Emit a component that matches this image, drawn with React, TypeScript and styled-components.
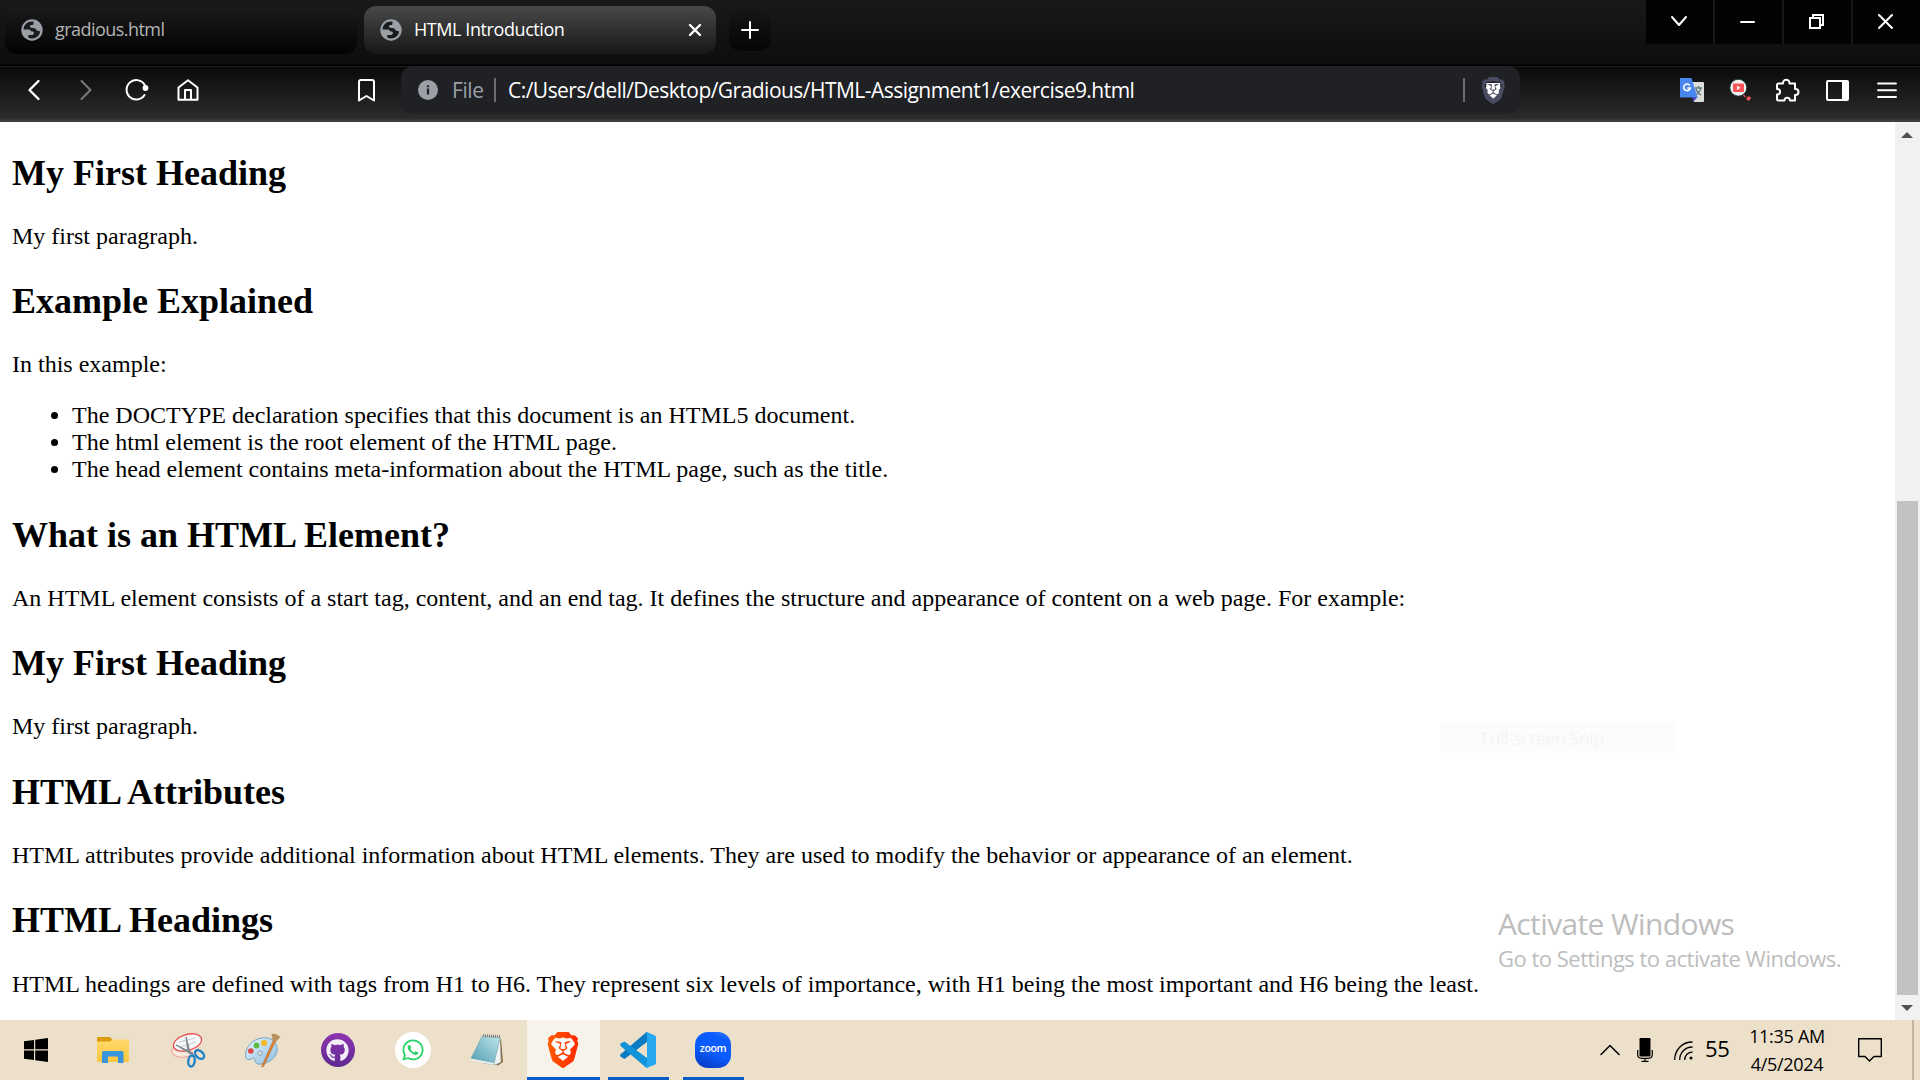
import React from "react";
import styled, { createGlobalStyle } from "styled-components";
import { FaGithub, FaWhatsapp } from "react-icons/fa";
import { SiBrave } from "react-icons/si";

const UI = `"Open Sans", "Noto Sans", sans-serif`;

const GlobalStyle = createGlobalStyle`
  html, body { margin: 0; padding: 0; overflow: hidden; background: #fff; }
  *, *::before, *::after { box-sizing: border-box; }
  button { border: 0; padding: 0; background: none; color: inherit; font: inherit; }
  svg { display: block; flex: none; overflow: visible; }
`;

const Screen = styled.div`
  width: 1920px;
  height: 1080px;
  display: grid;
  grid-template-rows: 67px 55px 898px 60px;
  overflow: hidden;
  font-family: ${UI};
`;

const TabStrip = styled.header`
  display: flex;
  align-items: flex-start;
  padding-left: 5px;
  background: linear-gradient(#191919, #0d0d0d 64px, #000 65px, #000 66px, #1c1c1c 66px);
`;

const Tab = styled.div<{ $active?: boolean }>`
  width: 352px;
  height: 48px;
  margin: 6px 7px 0 0;
  padding: 0 15px 0 16px;
  display: flex;
  align-items: center;
  border-radius: 12px;
  color: ${(p) => (p.$active ? "#fff" : "#b4b4b4")};
  background: ${(p) =>
    p.$active ? "linear-gradient(#494949, #171717)" : "linear-gradient(#1b1b1b, #020202)"};
`;

const TabTitle = styled.span<{ $track: number }>`
  flex: 1;
  margin: 0 0 2px 12px;
  font-size: 18px;
  line-height: 24px;
  letter-spacing: ${(p) => p.$track}px;
  white-space: nowrap;
`;

const NewTab = styled.button`
  display: grid;
  place-items: center;
  width: 42px;
  height: 41px;
  margin: 10px 0 0 6px;
  padding-bottom: 2px;
  border-radius: 12px;
  background: linear-gradient(#151515, #050505);
`;

const WindowControls = styled.div`
  display: grid;
  grid-template-columns: repeat(4, 67px);
  gap: 2px;
  height: 44px;
  margin-left: auto;
  background: #171717;
`;

const ControlButton = styled.button`
  display: grid;
  place-items: center;
  background: #020202;
  padding: 0 2px 1px 0;
`;

const Toolbar = styled.nav`
  display: flex;
  align-items: flex-start;
  background: linear-gradient(#0a0a0a, #2c2c2c 52px, #3d3d3d 53px);
`;

const NavGroup = styled.div`
  display: flex;
  width: 401px;
  padding: 11px 0 0 21px;
`;

const NavButton = styled.button<{ $push?: boolean }>`
  display: grid;
  place-items: center;
  width: 26px;
  height: 24px;
  margin-right: ${(p) => (p.$push ? 22 : 25)}px;
  margin-left: ${(p) => (p.$push ? "auto" : "0")};

  &:first-child {
    margin-right: 26px;
  }
`;

const AddressBar = styled.div`
  display: flex;
  align-items: center;
  width: 1119px;
  height: 48px;
  margin-top: -1px;
  padding: 0 16px 0 17px;
  border-radius: 12px;
  background: #202125;
  color: #fff;
  font-size: 21px;
  line-height: 28px;
  white-space: nowrap;
`;

const Scheme = styled.span`
  width: 42px;
  margin-left: 14px;
  color: #9aa0a6;
  letter-spacing: -0.4px;
`;

const Divider = styled.i`
  width: 2px;
  height: 24px;
  background: #6c6d70;
`;

const Url = styled.span`
  flex: 1;
  margin-left: 12px;
  letter-spacing: -0.53px;
`;

const ShieldButton = styled.button`
  margin-left: 17px;
`;

const Extensions = styled.div`
  display: grid;
  grid-template-columns: 49px 47px 50px 51px 20px;
  align-items: center;
  height: 26px;
  margin: 10px 23px 0 auto;
`;

const Viewport = styled.main`
  display: grid;
  grid-template-columns: 1895px 25px;
  background: #fff;
  min-height: 0;
  overflow: hidden;
`;

const Article = styled.article`
  position: relative;
  padding: 0 12px;
  overflow: hidden;
  font-family: "Liberation Serif", "Times New Roman", serif;
  font-size: 24px;
  line-height: 27px;
  color: #000;
`;

const Heading = styled.h2`
  margin: 31.36px 0 29.2px;
  font-size: 36px;
  line-height: 41px;
  font-weight: 700;

  &:first-child {
    margin-top: 30.6px;
  }
`;

const Paragraph = styled.p`
  margin: 24px 0;
  white-space: nowrap;
`;

const List = styled.ul`
  margin: 23.5px 0 31.4px;
  padding-left: 60px;
`;

const SnipLabel = styled.div`
  position: absolute;
  left: 1440px;
  top: 600px;
  width: 236px;
  height: 31px;
  padding-left: 41px;
  background: #fbfcfe;
  color: #f4f4f5;
  font: 18px/32px ${UI};
  letter-spacing: -0.6px;
`;

const Watermark = styled.aside`
  position: absolute;
  left: 1498px;
  top: 781px;
  color: #bdbdbd;
  font-family: ${UI};
  white-space: nowrap;
`;

const WatermarkTitle = styled.div`
  font-size: 30px;
  line-height: 41px;
  letter-spacing: -0.62px;
`;

const WatermarkText = styled.div`
  margin-top: -1px;
  font-size: 22px;
  line-height: 30px;
  letter-spacing: -0.5px;
`;

const ScrollBar = styled.div`
  display: grid;
  grid-template-rows: 25px 1fr 25px;
  justify-items: center;
  background: #f1f1f1;
`;

const Thumb = styled.div`
  width: 21px;
  height: 494px;
  margin: 354px 1px 0 0;
  background: #c1c1c1;
`;

const Arrow = styled.div<{ $down?: boolean }>`
  width: 0;
  height: 0;
  align-self: center;
  margin-right: 1px;
  border: 6px solid transparent;
  border-top-width: ${(p) => (p.$down ? "6px" : "0")};
  border-bottom-width: ${(p) => (p.$down ? "0" : "6px")};
  border-top-color: ${(p) => (p.$down ? "#505050" : "transparent")};
  border-bottom-color: ${(p) => (p.$down ? "transparent" : "#505050")};
`;

const Taskbar = styled.footer`
  display: flex;
  background: #ede0ca;
`;

const TaskItem = styled.button<{ $state?: "open" | "active" }>`
  display: grid;
  place-items: center;
  width: ${(p) => (p.$state === "active" ? 73 : p.$state ? 61 : 75)}px;
  height: 60px;
  margin: ${(p) => (p.$state === "active" ? "0 0 0 2px" : p.$state ? "0 6px 0 8px" : "0")};
  border-bottom: ${(p) => (p.$state ? "3px solid #0a5ac8" : "0")};
  padding: ${(p) => (p.$state ? "3px 1px 0 0" : "0")};
  background: ${(p) => (p.$state === "active" ? "#f8f3ea" : "transparent")};
`;

const IconDisc = styled.span<{ $bg: string; $size: number }>`
  display: grid;
  place-items: center;
  width: ${(p) => p.$size}px;
  height: ${(p) => p.$size}px;
  border-radius: 50%;
  background: ${(p) => p.$bg};
`;

const ZoomTile = styled.span`
  width: 36px;
  height: 36px;
  border-radius: 13px;
  background: linear-gradient(20deg, #0736b8, #0b5cff 45%, #0b5cff 80%, #3c7cff);
  color: #fff;
  font: 600 10.5px/33px ${UI};
  text-align: center;
  letter-spacing: -0.3px;
`;

const Tray = styled.div`
  display: flex;
  align-items: center;
  margin-left: auto;
  padding-right: 6px;
  color: #000;
`;

const TrayItem = styled.span<{ $gap: number }>`
  margin-left: ${(p) => p.$gap}px;
`;

const Counter = styled.span`
  width: 26px;
  margin: 0 0 4px 12px;
  font-size: 22px;
  font-weight: 500;
  line-height: 28px;
  letter-spacing: -0.3px;
`;

const Clock = styled.time`
  width: 78px;
  margin: 0 0 1px 17px;
  font-size: 18px;
  line-height: 28px;
  letter-spacing: -0.3px;
  text-align: center;
  white-space: nowrap;
`;

const DesktopEdge = styled.i`
  width: 2px;
  height: 60px;
  margin-left: 30px;
  background: #bfb5a4;
`;

const Globe = () => (
  <svg width="22" height="22" viewBox="0 0 22 22">
    <circle cx="11" cy="11" r="10.7" fill="#9aa0a6" />
    <path
      d="M12.5 2.6C7 1.8 2.8 5.6 2.6 10.4l5.1.2c2 .1 1.8 2 3.2 2 1.500 0 2.500.6 1.900 2l-1 1.400H8.200c-.8 0-1.100.6-1 1.400l.3 1.400c1 .4 2.200.7 3.500.7 4.300 0 7.400-3 8.200-7-.9-.3-2.500-.4-3.300-.9-1-.7-.8-2.300-2.400-2.400-1.800-.1-3 .2-4.200-.9-.9-.9-.4-2.300 1-2.400h1.400c.9 0 .9-1.300.8-2.300z"
      fill="#1a1b1d"
    />
  </svg>
);

const Stroke = ({ d, w, h, width = 2, color = "#fff" }: { d: string; w: number; h: number; width?: number; color?: string }) => (
  <svg width={w} height={h} viewBox={`0 0 ${w} ${h}`} fill="none" stroke={color} strokeWidth={width} strokeLinecap="round" strokeLinejoin="round">
    <path d={d} />
  </svg>
);

const TranslateIcon = () => (
  <svg width="24" height="24" viewBox="0 0 24 24">
    <path d="M9 4h14q1 0 1 1v18q0 1-1 1H14z" fill="#dcdcdc" />
    <path d="M15 10h7M18.500 8v2M21 10q-1 4-5 7M16 11q1 4 5 6" stroke="#607d80" strokeWidth="1.300" fill="none" />
    <path d="M12 19h5.500L13 24z" fill="#4338a8" />
    <path d="M0 0h11.500l6 19.500H1q-1 0-1-1z" fill="#4a86f0" />
    <path d="M9.800 7.500A3.300 3.300 0 1 0 10.300 10H7.300" fill="none" stroke="#fff" strokeWidth="1.600" />
  </svg>
);

const VideoSearchIcon = () => (
  <svg width="22" height="24" viewBox="0 0 22 24">
    <path d="M14.500 17l2 2" stroke="#e04a50" strokeWidth="1.500" />
    <circle cx="9.300" cy="9.700" r="8.500" fill="#f1f3f3" stroke="#17343c" strokeWidth="1" />
    <rect x="4" y="5.500" width="11" height="8.500" rx=".8" fill="#fb5358" />
    <path d="M8 7.700v4.200l3.500-2.100z" fill="#fff" />
    <path d="M19.800 18l2.400 2-2.400 3-3-2.200z" fill="#fb5358" />
  </svg>
);

const WindowsLogo = () => (
  <svg width="27" height="24" viewBox="0 0 27 24">
    <path d="M0 3.200l10-1.300v9.300H0zM11.200 1.700L24 0v11.200H11.200zM0 12.400h10v9.500L0 20.700zM11.200 12.400H24V24l-12.800-1.700z" />
  </svg>
);

const FolderIcon = () => (
  <svg width="32" height="27" viewBox="0 0 32 27">
    <defs>
      <linearGradient id="folder" x2="0" y2="1">
        <stop offset="0" stopColor="#ffd96b" />
        <stop offset="1" stopColor="#fbc63e" />
      </linearGradient>
    </defs>
    <path d="M0 1q0-1 1-1h12l2.500 3H32v3H0z" fill="#dc9c0c" />
    <path d="M0 4.500h13l2.500-2H31q1 0 1 1V24q0 1-1 1H1q-1 0-1-1z" fill="url(#folder)" />
    <path d="M5 26V15.500Q5 14 6.500 14h18.500q1.500 0 1.500 1.500V26h-5.500v-5.500q0-1-1-1h-8q-1 0-1 1V26z" fill="#3995dc" />
  </svg>
);

const SnippingIcon = () => (
  <svg width="34" height="34" viewBox="0 0 34 34" fill="none">
    <ellipse cx="14" cy="16.500" rx="13.500" ry="7.500" transform="rotate(-10 14 16.500)" fill="#f6e8dd" stroke="#ecaaa0" strokeWidth="1.200" />
    <ellipse cx="16.500" cy="9.500" rx="14.500" ry="8" transform="rotate(-17 16.500 9.500)" fill="#f4f6f8" stroke="#e5504e" strokeWidth="1.300" />
    <path d="M8 9l16-4M10 14l15-5" stroke="#c4ccd2" />
    <path d="M15 4l4.500 17-2.500-2zM5 12l17 8-2 1z" fill="#8e969c" stroke="#7b838a" />
    <ellipse cx="20.500" cy="28" rx="3.200" ry="5.500" transform="rotate(8 20.500 28)" stroke="#1f83c6" strokeWidth="2.400" />
    <ellipse cx="28.500" cy="21.500" rx="3.400" ry="5.300" transform="rotate(-48 28.500 21.500)" stroke="#1f83c6" strokeWidth="2.400" />
  </svg>
);

const PaintIcon = () => (
  <svg width="35" height="34" viewBox="0 0 35 34">
    <defs>
      <linearGradient id="palette" x2="1" y2="1">
        <stop offset="0" stopColor="#e9f5fc" />
        <stop offset="1" stopColor="#8cbddf" />
      </linearGradient>
    </defs>
    <path d="M17 5C7 6 0 15 .5 23c.2 4 4 4.500 6.500 2.500 2.500-1.500 3 .5 3 2.500 1 4.500 7 3.500 12 1.500 7-3 11-9 10-15C31 7 24 4 17 5zM15 18a2.200 2.200 0 1 1 0 4.400 2.200 2.200 0 0 1 0-4.400z" fill="url(#palette)" stroke="#74a5c8" strokeWidth="1" fillRule="evenodd" />
    <circle cx="5.800" cy="18" r="2.800" fill="#df4a45" />
    <circle cx="11.500" cy="12.500" r="2.900" fill="#5fbd45" />
    <circle cx="19" cy="10" r="3" fill="#f4b625" />
    <path d="M28.500 7l2 1-12 25.500-2 .5z" fill="#e0802a" stroke="#b5601c" strokeWidth=".5" />
    <path d="M26.500 1q4-1.500 9 3l-5 5-3-2z" fill="#b8905e" />
  </svg>
);

const NotepadIcon = () => (
  <svg width="34" height="32" viewBox="0 0 34 32">
    <defs>
      <linearGradient id="pad" x1="1" x2="0" y2="1">
        <stop offset="0" stopColor="#bfe6ea" />
        <stop offset="1" stopColor="#4f9cb4" />
      </linearGradient>
    </defs>
    <path d="M30 4l2 24-5 3.500-6-2z" fill="#8b6a3c" />
    <path d="M29 4l1 24-5 2.500-12-1z" fill="#eef3f4" stroke="#9aa8ac" strokeWidth=".6" />
    <path d="M11 2.500l18 1-6 26L0 24.500z" fill="url(#pad)" stroke="#6c98a3" strokeWidth=".6" />
    <path d="M0 24.500l23 4.500-.4 1.500L0 26z" fill="#e8eff0" />
    <path d="M12 1.500l18 1" stroke="#767b7b" strokeWidth="2.600" strokeDasharray="1 1" />
  </svg>
);

const Lion = ({ height, fill }: { height: number; fill: string }) => (
  <svg width={(height * 30) / 36} height={height} viewBox="0 0 30 36">
    <defs>
      <linearGradient id="lion" x2="1">
        <stop offset="0" stopColor="#ff5a00" />
        <stop offset="1" stopColor="#ff2a00" />
      </linearGradient>
    </defs>
    <path d="M6 8h18l1 11-10 12L5 19z" fill="#fff" />
    <SiBrave x="-3" y="0" size={36} style={{ fill }} />
  </svg>
);

const CodeIcon = () => (
  <svg width="36" height="36" viewBox="0 0 36 36">
    <path d="M27 0v10L4.500 27 .6 24.800Q-.4 23.500.6 22.200L26 .5z" fill="#0b7cc4" />
    <path d="M27 36V26L4.500 9.500.6 11.500Q-.4 12.800.6 14.100L26 35.500z" fill="#1292d8" />
    <path d="M27 0l8 3.500q1 .5 1 1.600v25.800q0 1.100-1 1.600L27 36z" fill="#26a9f0" />
  </svg>
);

const App: React.FC = () => (
  <Screen>
    <GlobalStyle />
    <TabStrip>
      <Tab>
        <Globe />
        <TabTitle $track={-0.55}>gradious.html</TabTitle>
      </Tab>
      <Tab $active>
        <Globe />
        <TabTitle $track={-0.42}>HTML Introduction</TabTitle>
        <Stroke w={12} h={12} width={2.4} d="M1 1l10 10M11 1L1 11" />
      </Tab>
      <NewTab>
        <Stroke w={18} h={18} d="M1 9h16M9 1v16" />
      </NewTab>
      <WindowControls>
        <ControlButton><Stroke w={14} h={10} d="M0 0l7 8 7-8" /></ControlButton>
        <ControlButton><Stroke w={15} h={2} d="M1 1h13" /></ControlButton>
        <ControlButton>
          <svg width="15" height="15" viewBox="0 0 15 15" fill="none" stroke="#fff" strokeWidth="2">
            <path d="M1 4h10v10H1zM4 4V1h10v10h-3" />
          </svg>
        </ControlButton>
        <ControlButton><Stroke w={15} h={15} d="M1 1l13 13M14 1L1 14" /></ControlButton>
      </WindowControls>
    </TabStrip>

    <Toolbar>
      <NavGroup>
        <NavButton><Stroke w={12} h={20} width={2.3} d="M10.500 1L1.500 10l9 9" /></NavButton>
        <NavButton><Stroke w={12} h={20} color="#7a7a7a" d="M1.500 1l9 9-9 9" /></NavButton>
        <NavButton>
          <svg width="24" height="22" viewBox="0 0 24 22">
            <path d="M19.500 16A9.700 9.700 0 1 1 20 6.500" fill="none" stroke="#fff" strokeWidth="2" strokeLinecap="round" />
            <circle cx="20.500" cy="9" r="2.900" fill="#fff" />
          </svg>
        </NavButton>
        <NavButton><Stroke w={22} h={22} d="M1.500 8.500L11 1.300l9.500 7.200V20.700H1.500zM8 20.500V11h6v9.500" /></NavButton>
        <NavButton $push><Stroke w={17} h={23} d="M1 3q0-2 2-2h11q2 0 2 2v18.500l-7.500-4.500L1 21.500z" /></NavButton>
      </NavGroup>
      <AddressBar>
        <svg width="20" height="20" viewBox="0 0 20 20">
          <circle cx="10" cy="10" r="10" fill="#9aa0a6" />
          <path d="M8.900 8.500h2.200v6H8.900zM8.900 5.200h2.200v2H8.900z" fill="#202125" />
        </svg>
        <Scheme>File</Scheme>
        <Divider />
        <Url>C:/Users/dell/Desktop/Gradious/HTML-Assignment1/exercise9.html</Url>
        <Divider />
        <ShieldButton><Lion height={27} fill="#4b4b62" /></ShieldButton>
      </AddressBar>
      <Extensions>
        <TranslateIcon />
        <VideoSearchIcon />
        <Stroke w={24} h={23} d="M2.500 4.500H7V4a3 3 0 0 1 6.500 0v.5H19V10h.5a3 3 0 0 1 0 6H19v5.500h-5V21a2.800 2.800 0 0 0-5.500 0v.5h-6q-1.500 0-1.500-1.500V15.500h.8a2.800 2.800 0 0 0 0-5.500H1V6q0-1.500 1.500-1.500z" />
        <svg width="23" height="21" viewBox="0 0 23 21">
          <rect x="1" y="1" width="21" height="19" rx="1" fill="none" stroke="#fff" strokeWidth="2" />
          <path d="M16 1h6v19h-6z" fill="#fff" />
        </svg>
        <Stroke w={20} h={16} d="M1 1.500h18M1 8.200h18M1 15h18" width={1.9} />
      </Extensions>
    </Toolbar>

    <Viewport>
      <Article>
        <Heading>My First Heading</Heading>
        <Paragraph>My first paragraph.</Paragraph>
        <Heading>Example Explained</Heading>
        <Paragraph>In this example:</Paragraph>
        <List>
          <li>The DOCTYPE declaration specifies that this document is an HTML5 document.</li>
          <li>The html element is the root element of the HTML page.</li>
          <li>The head element contains meta-information about the HTML page, such as the title.</li>
        </List>
        <Heading>What is an HTML Element?</Heading>
        <Paragraph>
          An HTML element consists of a start tag, content, and an end tag. It defines the structure and appearance of
          content on a web page. For example:
        </Paragraph>
        <Heading>My First Heading</Heading>
        <Paragraph>My first paragraph.</Paragraph>
        <Heading>HTML Attributes</Heading>
        <Paragraph>
          HTML attributes provide additional information about HTML elements. They are used to modify the behavior or
          appearance of an element.
        </Paragraph>
        <Heading>HTML Headings</Heading>
        <Paragraph>
          HTML headings are defined with tags from H1 to H6. They represent six levels of importance, with H1 being the
          most important and H6 being the least.
        </Paragraph>
        <SnipLabel>Full-screen Snip</SnipLabel>
        <Watermark>
          <WatermarkTitle>Activate Windows</WatermarkTitle>
          <WatermarkText>Go to Settings to activate Windows.</WatermarkText>
        </Watermark>
      </Article>
      <ScrollBar>
        <Arrow />
        <Thumb />
        <Arrow $down />
      </ScrollBar>
    </Viewport>

    <Taskbar>
      <TaskItem><WindowsLogo /></TaskItem>
      <TaskItem><FolderIcon /></TaskItem>
      <TaskItem><SnippingIcon /></TaskItem>
      <TaskItem><PaintIcon /></TaskItem>
      <TaskItem>
        <IconDisc $size={34} $bg="linear-gradient(#8e34b0, #5e2a90)"><FaGithub size={23} color="#f4eef8" /></IconDisc>
      </TaskItem>
      <TaskItem>
        <IconDisc $size={36} $bg="#fff"><FaWhatsapp size={24} color="#25d366" /></IconDisc>
      </TaskItem>
      <TaskItem><NotepadIcon /></TaskItem>
      <TaskItem $state="active"><Lion height={36} fill="url(#lion)" /></TaskItem>
      <TaskItem $state="open"><CodeIcon /></TaskItem>
      <TaskItem $state="open"><ZoomTile>zoom</ZoomTile></TaskItem>
      <Tray>
        <Stroke w={18} h={10} color="#000" width={1.5} d="M0 9.500L9 .5l9 9" />
        <TrayItem $gap={18}>
          <svg width="16" height="24" viewBox="0 0 16 24">
            <rect x="2.500" width="11" height="18.500" rx="1.200" />
            <path d="M.7 12v4.500q0 3.800 4 3.800h6.600q4 0 4-3.800V12M8 20.500v3M4.500 23.300h7" fill="none" stroke="#000" strokeWidth="1.200" />
          </svg>
        </TrayItem>
        <TrayItem $gap={21}>
          <svg width="19" height="19" viewBox="0 0 19 19" fill="none" stroke="#000" strokeWidth="1.300">
            <path d="M.7 19C.7 9 8 1 18.500 1M5.700 19C5.700 11.500 11 6 18.500 6M10.700 19c0-4.500 3.300-8 7.800-8" />
            <circle cx="17" cy="17" r="1.500" fill="#000" stroke="none" />
          </svg>
        </TrayItem>
        <Counter>55</Counter>
        <Clock>11:35 AM<br />4/5/2024</Clock>
        <TrayItem $gap={32}>
          <Stroke w={24} h={24} color="#000" width={1.4} d="M.7.700h22.600v17.800H16L11.500 23 7 18.500H.7z" />
        </TrayItem>
        <DesktopEdge />
      </Tray>
    </Taskbar>
  </Screen>
);

export default App;
